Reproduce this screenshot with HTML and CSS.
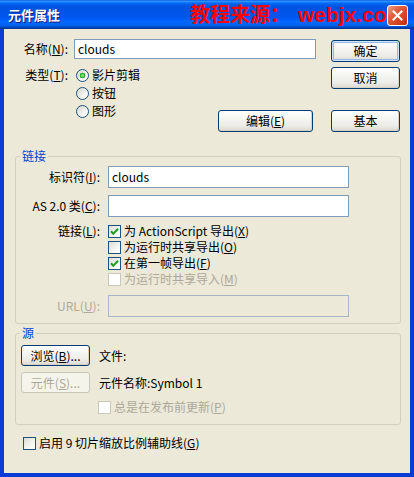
FILE: index.html
```html
<!DOCTYPE html>
<html lang="zh-CN">
<head>
<meta charset="utf-8">
<title>元件属性</title>
<link rel="stylesheet" href="styles.css">
</head>
<body>
<div class="window">
  <div class="titlebar">
    <span class="title">元件属性</span>
    <span class="watermark">教程来源：<span class="wm-latin">webjx.com</span></span>
    <span class="close"><svg width="11" height="11" viewBox="0 0 11 11"><path d="M1.5 1.5 L9.5 9.5 M9.5 1.5 L1.5 9.5" stroke="#fff" stroke-width="2" stroke-linecap="square"/></svg></span>
  </div>
  <div class="client">
    <div class="top">
      <div class="left">
        <div class="name-row">
          <span class="lbl">名称(<u>N</u>):</span>
          <div class="edit name-edit">clouds</div>
        </div>
        <div class="type-row">
          <span class="lbl">类型(<u>T</u>):</span>
          <div class="radios">
            <div class="opt"><span class="rb on"></span><span>影片剪辑</span></div>
            <div class="opt"><span class="rb"></span><span>按钮</span></div>
            <div class="opt"><span class="rb"></span><span>图形</span></div>
          </div>
          <div class="btn edit-btn">编辑(<u>E</u>)</div>
        </div>
      </div>
      <div class="right-btns">
        <div class="btn default">确定</div>
        <div class="btn cancel">取消</div>
        <div class="btn basic">基本</div>
      </div>
    </div>

    <fieldset class="group link">
      <legend>链接</legend>
      <div class="frow">
        <span class="flbl">标识符(<u>I</u>):</span>
        <div class="edit fedit">clouds</div>
      </div>
      <div class="frow r2">
        <span class="flbl">AS 2.0 类(<u>C</u>):</span>
        <div class="edit fedit"></div>
      </div>
      <div class="frow checks">
        <span class="flbl">链接(<u>L</u>):</span>
        <div class="checklist">
          <div class="opt"><span class="cb"><svg width="9" height="9" viewBox="0 0 9 9"><path d="M1 4.2 L3.3 6.7 L8 1.8" fill="none" stroke="#21A121" stroke-width="2"/></svg></span><span>为 ActionScript 导出(<u>X</u>)</span></div>
          <div class="opt"><span class="cb"></span><span>为运行时共享导出(<u>O</u>)</span></div>
          <div class="opt"><span class="cb"><svg width="9" height="9" viewBox="0 0 9 9"><path d="M1 4.2 L3.3 6.7 L8 1.8" fill="none" stroke="#21A121" stroke-width="2"/></svg></span><span>在第一帧导出(<u>F</u>)</span></div>
          <div class="opt dis"><span class="cb off"></span><span>为运行时共享导入(<u>M</u>)</span></div>
        </div>
      </div>
      <div class="frow url">
        <span class="flbl dis">URL(<u>U</u>):</span>
        <div class="edit fedit disabled"></div>
      </div>
    </fieldset>

    <fieldset class="group source">
      <legend>源</legend>
      <div class="srow">
        <div class="btn sbtn">浏览(<u>B</u>)...</div>
        <span class="stext">文件:</span>
      </div>
      <div class="srow r2">
        <div class="btn sbtn off">元件(<u>S</u>)...</div>
        <span class="stext">元件名称:Symbol 1</span>
      </div>
      <div class="opt dis always"><span class="cb off"></span><span>总是在发布前更新(<u>P</u>)</span></div>
    </fieldset>

    <div class="opt scale"><span class="cb"></span><span>启用 9 切片缩放比例辅助线(<u>G</u>)</span></div>
  </div>
</div>
</body>
</html>
```

FILE: styles.css
```css
html, body {
  margin: 0;
  padding: 0;
  background: #ECE9D8;
}

.window {
  width: 414px;
  height: 477px;
  display: flex;
  flex-direction: column;
  font-family: "Noto Sans CJK SC", sans-serif;
  font-size: 12px;
  line-height: 16px;
  color: #000;
  overflow: hidden;
}

.titlebar {
  position: relative;
  height: 29px;
  flex: none;
  display: flex;
  align-items: center;
  padding: 0 0 0 8px;
  overflow: hidden;
  background: linear-gradient(to bottom,
    #0058EE 0%, #3593FF 4%, #288EFF 6%, #127DFF 8%, #036FFC 10%,
    #0262EE 14%, #0057E5 20%, #0054E3 24%, #0055EB 56%, #005BF5 66%,
    #026AFE 76%, #0062EF 86%, #0052D6 92%, #0040AB 96%, #003092 100%);
}

.title {
  flex: none;
  color: #fff;
  font-weight: 700;
  font-size: 13px;
  text-shadow: 1px 1px #0A1883;
}

.watermark {
  flex: none;
  margin-left: 130px;
  white-space: nowrap;
  color: #FF0000;
  font-family: "Liberation Sans", "Noto Sans CJK SC", sans-serif;
  font-weight: 700;
  font-size: 20px;
  line-height: 29px;
}
.wm-latin { margin-left: 8px; font-size: 21px; }

.close {
  position: absolute;
  top: 5px;
  right: 6px;
  width: 21px;
  height: 21px;
  box-sizing: border-box;
  border: 1px solid #fff;
  border-radius: 3px;
  background: linear-gradient(135deg, #F0A08A 0%, #E2613F 35%, #D3421E 70%, #B9300F 100%);
  display: flex;
  align-items: center;
  justify-content: center;
}

.client {
  flex: 1;
  background: #ECE9D8;
  border: 4px solid #0B3CD6;
  border-top: 0;
  padding: 10px 9px 0 11px;
}

u { text-decoration: underline; text-underline-offset: 1px; }

/* top section */
.top { display: flex; }
.left { width: 301px; flex: none; }

.name-row { display: flex; align-items: center; height: 20px; }
.lbl { width: 53px; flex: none; text-align: right; white-space: nowrap; }

.edit {
  box-sizing: border-box;
  border: 1px solid #7F9DB9;
  background: #fff;
  padding: 0 3px;
  display: flex;
  align-items: center;
  white-space: nowrap;
}
.edit.disabled { background: #ECE9D8; border-color: #A5B6C8; }

.name-edit { margin-left: 6px; width: 242px; height: 20px; }

.type-row { display: flex; margin-top: 7px; }
.type-row .lbl { line-height: 18px; }
.radios { margin-left: 8px; }
.radios .opt { height: 18px; }

.opt { display: flex; align-items: center; gap: 3px; height: 16px; white-space: nowrap; }
.opt.dis, .dis { color: #ACA899; }

.rb {
  width: 13px;
  height: 13px;
  flex: none;
  box-sizing: border-box;
  border-radius: 50%;
  border: 1px solid #1C5180;
  background: linear-gradient(135deg, #D6D5CC 0%, #F3F3EF 60%, #fff 100%);
}
.rb.on {
  background:
    radial-gradient(circle at center, #6EE06E 0 1.2px, #2BB32B 2px, #1E9A1E 2.6px, transparent 3.1px),
    linear-gradient(135deg, #D6D5CC 0%, #F3F3EF 60%, #fff 100%);
}

.cb {
  width: 13px;
  height: 13px;
  flex: none;
  box-sizing: border-box;
  border: 1px solid #1C5180;
  background: linear-gradient(135deg, #DCDCD7 0%, #F5F5F1 60%, #fff 100%);
  display: flex;
  align-items: center;
  justify-content: center;
}
.cb.off { border-color: #CAC8BB; background: #fff; }

.btn {
  box-sizing: border-box;
  height: 22px;
  border: 1px solid #003C74;
  border-radius: 3px;
  background: linear-gradient(to bottom, #FFFFFF 0%, #F7F7F4 30%, #ECEBE6 75%, #DCD8CD 100%);
  box-shadow: inset -1px -1px 0 #D6D0C5;
  display: flex;
  align-items: center;
  justify-content: center;
  white-space: nowrap;
}
.btn.default { box-shadow: inset 0 0 0 1px #CEE7FF, inset 0 0 0 2px #98B8EA; }
.btn.off {
  border-color: #C9C7BA;
  background: #F5F4EA;
  box-shadow: none;
  color: #ACA899;
}

.edit-btn { margin: 44px 3px 0 auto; width: 95px; }

.right-btns {
  margin: 1px 0 0 15px;
  width: 69px;
  flex: none;
  display: flex;
  flex-direction: column;
}
.right-btns .cancel { margin-top: 5px; }
.right-btns .basic { margin-top: 21px; }

/* group boxes */
.group {
  margin: 16px 0 0;
  padding: 2px 0 6px;
  border: 1px solid #D0D0BF;
  border-radius: 3px;
  min-width: 0;
}
.group legend {
  margin-left: 4px;
  padding: 0 2px;
  color: #0046D5;
  line-height: 16px;
}

.frow { display: flex; align-items: center; }
.flbl { width: 84px; flex: none; text-align: right; white-space: nowrap; }
.fedit { margin-left: 8px; width: 241px; height: 22px; }
.frow.r2 { margin-top: 7px; }
.frow.checks { align-items: flex-start; margin-top: 6px; }
.checklist { margin-left: 8px; }
.frow.url { margin-top: 8px; }

.group.source { margin-top: 1px; padding: 4px 0 9px; }
.srow { display: flex; align-items: center; margin-left: 5px; }
.srow.r2 { margin-top: 6px; }
.sbtn { width: 69px; height: 21px; }
.stext { margin-left: 9px; }
.always { margin: 6px 0 0 82px; }

.scale { margin: 10px 0 0 8px; }
```
